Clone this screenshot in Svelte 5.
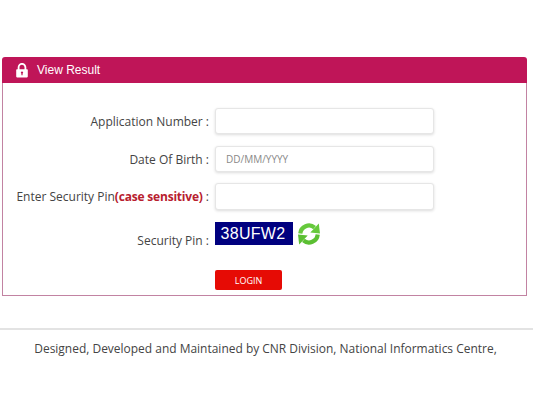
<script>
  let applicationNumber = '';
  let dob = '';
  let pin = '';
</script>

<div class="page">
  <section class="panel">
    <header class="panel__heading">
      <svg class="panel__lock" width="12" height="15" viewBox="0 0 12 15" aria-hidden="true">
        <path d="M2.6 7V4.2a3.4 3.4 0 0 1 6.8 0V7" fill="none" stroke="#fff" stroke-width="1.8" />
        <path fill-rule="evenodd" fill="#fff" d="M1 6.2h10a.8.8 0 0 1 .8.8v6.6a.8.8 0 0 1-.8.8H1a.8.8 0 0 1-.8-.8V7a.8.8 0 0 1 .8-.8zM6 8.4a1.2 1.2 0 0 0-.6 2.2v1.6h1.2v-1.6A1.2 1.2 0 0 0 6 8.4z" />
      </svg>
      <span>View Result</span>
    </header>

    <form class="panel__body" on:submit|preventDefault>
      <label class="row row--first">
        <span class="row__label">Application Number :</span>
        <input bind:value={applicationNumber} />
      </label>
      <label class="row row--dob">
        <span class="row__label">Date Of Birth :</span>
        <input bind:value={dob} placeholder="DD/MM/YYYY" />
      </label>
      <label class="row row--pin">
        <span class="row__label">Enter Security Pin<b>(case sensitive)</b> :</span>
        <input bind:value={pin} />
      </label>
      <div class="row row--captcha">
        <span class="row__label">Security Pin :</span>
        <div class="captcha">38UFW2</div>
        <button type="button" class="refresh" aria-label="Refresh security pin">
          <svg width="24" height="24" viewBox="0 0 24 24" aria-hidden="true">
            <g id="arrow">
              <path d="M3.300 11.500A8.700 8.700 0 0 1 17.600 5.600" fill="none" stroke="#66c93c" stroke-width="4.200" />
              <path d="M21.800 1.600L23 11.600 13.300 10.400z" fill="#66c93c" />
            </g>
            <g transform="rotate(180 12 12)">
              <path d="M3.300 11.500A8.700 8.700 0 0 1 17.600 5.600" fill="none" stroke="#5bbf32" stroke-width="4.200" />
              <path d="M21.800 1.600L23 11.600 13.300 10.400z" fill="#5bbf32" />
            </g>
          </svg>
        </button>
      </div>
      <div class="row row--login">
        <span class="row__label"></span>
        <button class="login" type="submit">LOGIN</button>
      </div>
    </form>
  </section>

  <footer class="footer">
    <p>Designed, Developed and Maintained by CNR Division, National Informatics Centre,</p>
  </footer>
</div>

<style>
  :global(body) {
    margin: 0;
    background: #fff;
  }

  .page {
    padding-top: 57px;
    font-family: "Open Sans", "Liberation Sans", sans-serif;
    color: #444;
  }

  .panel {
    width: 525px;
    margin-left: 2px;
  }

  .panel__heading {
    display: flex;
    align-items: center;
    gap: 9px;
    height: 26px;
    padding-left: 14px;
    background: #bf1558;
    border-radius: 3px 3px 0 0;
    color: #fff;
    font-family: "Liberation Sans", Arial, sans-serif;
    font-size: 12px;
  }

  .panel__lock {
    flex-shrink: 0;
  }

  .panel__body {
    display: flex;
    flex-direction: column;
    height: 213px;
    padding-top: 25px;
    box-sizing: border-box;
    border: 1px solid #c283a2;
    border-top: 0;
    margin: 0;
  }

  .row {
    display: flex;
    align-items: center;
    font-size: 12px;
  }

  .row--dob { margin-top: 12px; }
  .row--pin { margin-top: 11px; }
  .row--captcha { margin-top: 12px; align-items: flex-start; }
  .row--login { margin-top: 11px; }

  .row__label {
    width: 206px;
    flex-shrink: 0;
    margin-right: 6px;
    text-align: right;
    white-space: nowrap;
  }

  .row--captcha .row__label {
    line-height: 37px;
  }

  .row__label b {
    color: #b8202e;
    font-weight: 700;
    letter-spacing: -0.2px;
  }

  input {
    width: 219px;
    height: 26px;
    box-sizing: border-box;
    padding: 0 10px;
    background: #fff;
    border: 1px solid #e6e6e6;
    border-radius: 3px;
    box-shadow: 0 1px 3px rgba(0, 0, 0, 0.14);
    font-family: inherit;
    font-size: 10px;
    outline: none;
  }

  .row--pin input {
    height: 27px;
  }

  input::placeholder {
    color: #888;
    opacity: 1;
  }

  .captcha {
    width: 78px;
    height: 23px;
    padding-right: 2px;
    box-sizing: border-box;
    background: #00007f;
    color: #fff;
    font-family: "Liberation Sans", Arial, sans-serif;
    font-size: 16px;
    letter-spacing: 0.3px;
    line-height: 23px;
    text-align: center;
  }

  .refresh {
    display: block;
    width: 24px;
    height: 24px;
    padding: 0;
    margin-left: 4px;
    border: 0;
    background: none;
  }

  .refresh svg {
    display: block;
  }

  .login {
    width: 67px;
    height: 20px;
    padding: 0;
    border: 0;
    border-radius: 2px;
    background: #e60b05;
    color: #fff;
    font-family: inherit;
    font-size: 9px;
  }

  .footer {
    margin-top: 32px;
    border-top: 2px solid #e3e3e3;
    text-align: center;
  }

  .footer p {
    margin: 10px 0 0;
    padding-right: 2px;
    font-size: 11.98px;
    line-height: 17px;
    color: #444;
  }
</style>
